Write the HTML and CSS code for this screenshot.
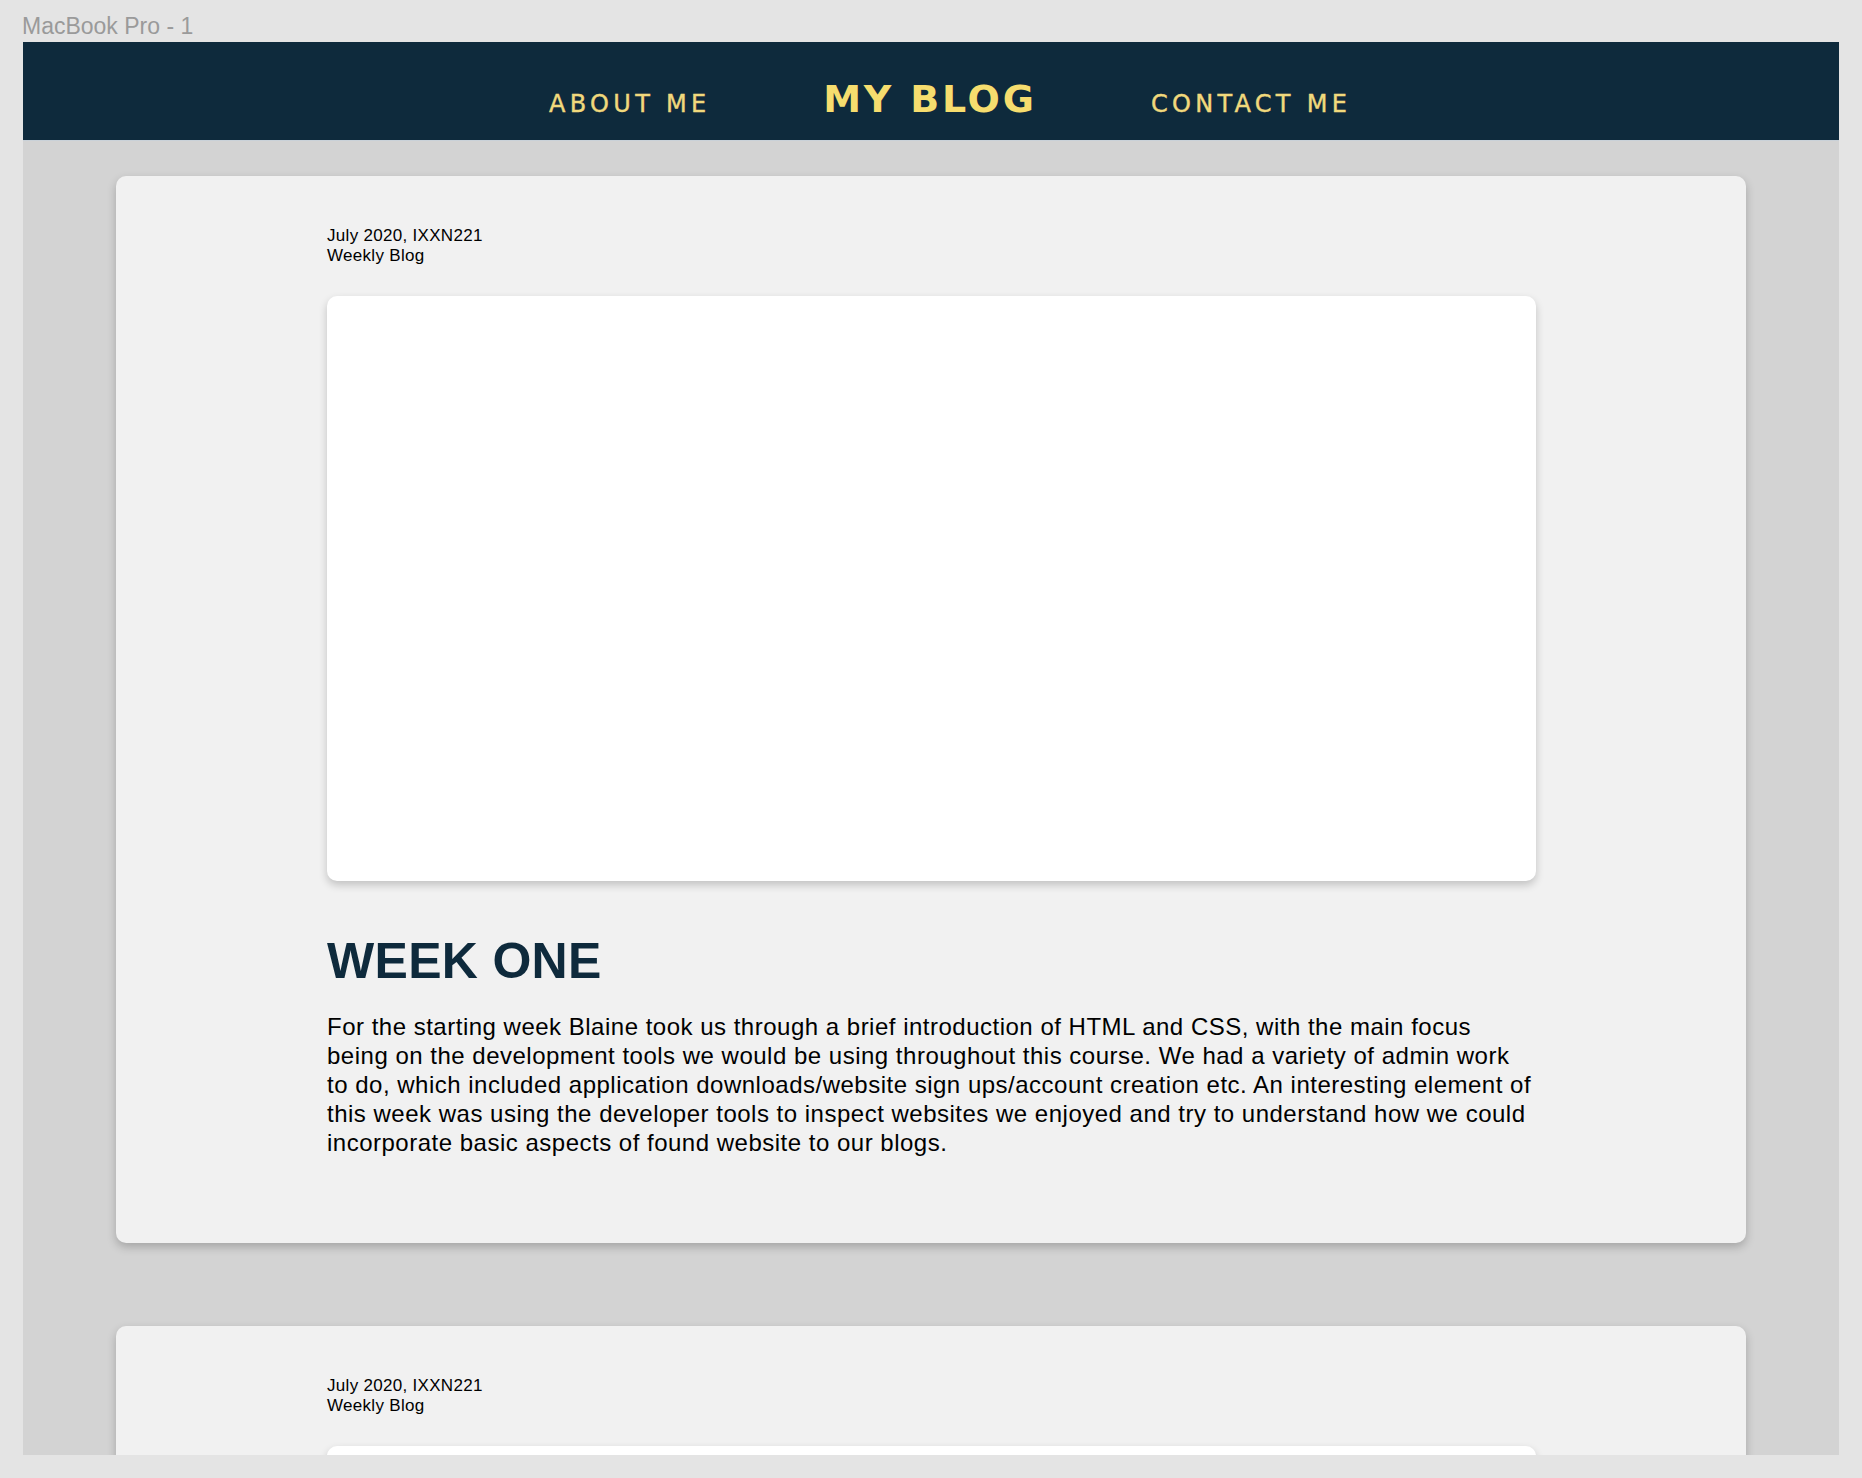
FILE: index.html
```html
<!DOCTYPE html>
<html lang="en">
<head>
<meta charset="utf-8">
<title>MacBook Pro - 1</title>
<link rel="stylesheet" href="styles.css">
</head>
<body>
<div class="label">MacBook Pro - 1</div>
<div class="frame">
  <nav class="nav">
    <a class="nav-link">ABOUT ME</a>
    <span class="nav-title">MY BLOG</span>
    <a class="nav-link">CONTACT ME</a>
  </nav>
  <main class="posts">
    <article class="card">
      <div class="meta">July 2020, IXXN221<br>Weekly Blog</div>
      <div class="media"></div>
      <h1 class="title">WEEK ONE</h1>
      <p class="body">For the starting week Blaine took us through a brief introduction of HTML and CSS, with the main focus being on the development tools we would be using throughout this course. We had a variety of admin work to do, which included application downloads/website sign ups/account creation etc. An interesting element of this week was using the developer tools to inspect websites we enjoyed and try to understand how we could incorporate basic aspects of found website to our blogs.</p>
    </article>
    <article class="card">
      <div class="meta">July 2020, IXXN221<br>Weekly Blog</div>
      <div class="media"></div>
    </article>
  </main>
</div>
</body>
</html>
```

FILE: styles.css
```css
* { box-sizing: border-box; }
html, body { margin: 0; padding: 0; }
body {
  background: #e4e4e4;
  font-family: "Liberation Sans", Arial, Helvetica, sans-serif;
  width: 1862px;
  height: 1478px;
  overflow: hidden;
}
.label {
  height: 42px;
  padding: 15px 0 0 22px;
  font-size: 23px;
  line-height: 23px;
  color: #9a9a9a;
}
.frame {
  margin: 0 23px;
  height: 1413px;
  background: #d3d3d3;
  overflow: hidden;
}
.nav {
  height: 99px;
  background: #0e2a3c;
  border-bottom: 1px solid #c9d1d8;
  display: flex;
  justify-content: center;
  align-items: baseline;
  gap: 117px;
  padding: 38px 0 0 34px;
  font-family: "DejaVu Sans", Verdana, sans-serif;
}
.nav-link {
  font-size: 24px;
  line-height: 24px;
  letter-spacing: 4.3px;
  margin-right: -4.3px;
  color: #f1d97c;
  -webkit-text-stroke: 0.4px #f1d97c;
}
.nav-title {
  font-size: 38px;
  line-height: 38px;
  font-weight: bold;
  letter-spacing: 2.8px;
  margin-right: -2.8px;
  color: #f6dd6e;
}
.posts {
  padding: 35px 93px 0;
  display: flex;
  flex-direction: column;
  gap: 83px;
}
.card {
  background: #f1f1f1;
  border-radius: 10px;
  box-shadow: 0 4px 10px rgba(0, 0, 0, 0.22);
  padding: 50px 210px 86px 211px;
}
.meta {
  font-size: 17px;
  line-height: 20px;
  letter-spacing: 0.3px;
  color: #000;
}
.media {
  margin-top: 30px;
  height: 585px;
  background: #fff;
  border-radius: 10px;
  box-shadow: 0 4px 8px rgba(0, 0, 0, 0.2);
}
.title {
  margin: 52px 0 0;
  font-size: 50px;
  line-height: 57px;
  font-weight: bold;
  letter-spacing: 0.3px;
  color: #0e2a3c;
}
.body {
  margin: 22px 0 0;
  font-size: 24px;
  line-height: 29px;
  letter-spacing: 0.5px;
  color: #000;
}
```
